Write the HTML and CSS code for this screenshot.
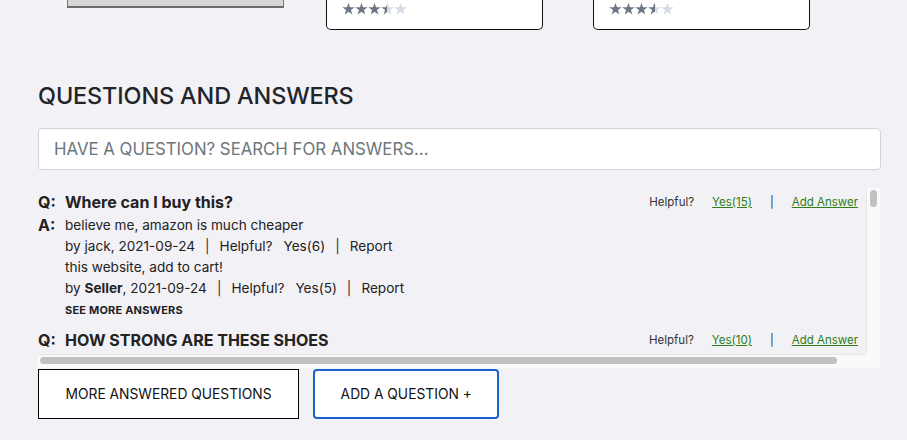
FILE: index.html
```html
<!DOCTYPE html>
<html lang="en">
<head>
<meta charset="utf-8">
<title>Questions and Answers</title>
<link rel="stylesheet" href="styles.css">
</head>
<body>
<svg class="defs" width="0" height="0" aria-hidden="true">
  <defs>
    <symbol id="star" viewBox="0 0 13 12">
      <path d="M6.5 0 L8.03 4.2 L12.68 4.3 L8.97 7 L10.32 11.5 L6.5 8.8 L2.68 11.5 L4.03 7 L0.32 4.3 L4.97 4.2Z"/>
    </symbol>
    <linearGradient id="half" x1="0" x2="1" y1="0" y2="0">
      <stop offset="50%" stop-color="#6d7783"/>
      <stop offset="50%" stop-color="#d5dbe6"/>
    </linearGradient>
  </defs>
</svg>

<div class="related-row">
  <div class="thumb"></div>
  <div class="card">
    <svg class="stars" width="65" height="12" viewBox="0 0 65 12">
      <use href="#star" x="0" width="13" height="12" class="on"/>
      <use href="#star" x="13" width="13" height="12" class="on"/>
      <use href="#star" x="26" width="13" height="12" class="on"/>
      <use href="#star" x="39" width="13" height="12" fill="url(#half)"/>
      <use href="#star" x="52" width="13" height="12" class="off"/>
    </svg>
  </div>
  <div class="card card-last">
    <svg class="stars" width="65" height="12" viewBox="0 0 65 12">
      <use href="#star" x="0" width="13" height="12" class="on"/>
      <use href="#star" x="13" width="13" height="12" class="on"/>
      <use href="#star" x="26" width="13" height="12" class="on"/>
      <use href="#star" x="39" width="13" height="12" fill="url(#half)"/>
      <use href="#star" x="52" width="13" height="12" class="off"/>
    </svg>
  </div>
</div>

<section class="qa">
  <h2 class="qa-title">QUESTIONS AND ANSWERS</h2>
  <input class="search" type="text" placeholder="HAVE A QUESTION? SEARCH FOR ANSWERS...">

  <div class="qa-list">
    <div class="qa-viewport">
      <div class="question">
        <div class="q-row">
          <span class="label">Q:</span>
          <span class="q-text">Where can I buy this?</span>
          <div class="q-actions">
            <span>Helpful?</span>
            <a href="#" class="link">Yes(15)</a>
            <span>|</span>
            <a href="#" class="link">Add Answer</a>
          </div>
        </div>
        <div class="a-row">
          <span class="label a-label">A:</span>
          <div class="answers">
            <div class="answer">
              <p class="a-body">believe me, amazon is much cheaper</p>
              <p class="a-meta">by jack, 2021-09-24<span class="sep">|</span>Helpful?<span class="yes">Yes(6)</span><span class="sep">|</span>Report</p>
            </div>
            <div class="answer">
              <p class="a-body">this website, add to cart!</p>
              <p class="a-meta">by <b>Seller</b>, 2021-09-24<span class="sep">|</span>Helpful?<span class="yes">Yes(5)</span><span class="sep">|</span>Report</p>
            </div>
            <button class="see-more" type="button">SEE MORE ANSWERS</button>
          </div>
        </div>
      </div>

      <div class="question">
        <div class="q-row">
          <span class="label">Q:</span>
          <span class="q-text">HOW STRONG ARE THESE SHOES</span>
          <div class="q-actions">
            <span>Helpful?</span>
            <a href="#" class="link">Yes(10)</a>
            <span>|</span>
            <a href="#" class="link">Add Answer</a>
          </div>
        </div>
      </div>
    </div>
    <div class="vscroll"><div class="vthumb"></div></div>
    <div class="hscroll"><div class="hthumb"></div></div>
    <div class="scroll-corner"></div>
  </div>

  <div class="qa-buttons">
    <button class="btn" type="button">MORE ANSWERED QUESTIONS</button>
    <button class="btn btn-focus" type="button">ADD A QUESTION +</button>
  </div>
</section>
</body>
</html>
```

FILE: styles.css
```css
* { box-sizing: border-box; }

html, body {
  margin: 0;
  padding: 0;
  background: #f2f1f6;
  font-family: "Inter", "Liberation Sans", sans-serif;
  color: #222;
  overflow: hidden;
}

.defs { position: absolute; }

.related-row {
  display: flex;
  align-items: flex-start;
  padding-left: 67px;
}

.thumb {
  width: 217px;
  height: 8px;
  background: #d6d6d6;
  border: 1px solid #777;
  border-top: none;
  border-bottom: 2px solid #6c6c6c;
}

.card {
  width: 217px;
  height: 30px;
  margin-left: 42px;
  background: #fff;
  border: 1px solid #111;
  border-top: none;
  border-radius: 0 0 5px 5px;
  padding: 3px 0 0 15px;
}

.card-last { margin-left: 50px; }

.stars { display: block; }
.stars .on { fill: #6d7783; }
.stars .off { fill: #d5dbe6; }

.qa {
  padding: 0 27px 0 38px;
}

.qa-title {
  margin: 52px 0 0;
  font-size: 23.4px;
  font-weight: 500;
  line-height: 28px;
  color: #212529;
  letter-spacing: -0.1px;
}

.search {
  display: block;
  width: 843px;
  height: 42px;
  margin-top: 18px;
  padding: 0 15px;
  border: 1px solid #ced4da;
  border-radius: 4px;
  background: #fff;
  font-family: inherit;
  font-size: 16.8px;
  color: #495057;
}
.search::placeholder { color: #6c757d; }

.qa-list {
  display: grid;
  grid-template-columns: 828px 14px;
  grid-template-rows: 166px 14px;
  width: 842px;
  margin-top: 18px;
}

.qa-viewport {
  overflow: hidden;
  padding: 2px 8px 0 0;
}

.vscroll {
  background: #fafafa;
  border-left: 1px solid #e6e6e6;
  padding: 2px 3px 0 3px;
}

.vthumb {
  width: 7px;
  height: 17px;
  border-radius: 4px;
  background: #c1c1c1;
}

.hscroll {
  background: #fafafa;
  border-top: 1px solid #e6e6e6;
  padding: 2px 0 0 2px;
}

.hthumb {
  width: 797px;
  height: 7px;
  border-radius: 4px;
  background: #c1c1c1;
}

.scroll-corner { background: #fafafa; }

.question { margin-bottom: 8px; }

.q-row {
  display: flex;
  align-items: center;
  height: 24px;
}

.label {
  width: 27px;
  flex: none;
  font-size: 16px;
  font-weight: 700;
  line-height: 24px;
}

.q-text {
  flex: 1;
  font-size: 16px;
  font-weight: 700;
  line-height: 24px;
}

.q-actions {
  display: flex;
  gap: 18px;
  font-size: 11.5px;
  color: #333;
}

.link {
  color: #2f7d14;
  text-decoration: underline;
}

.a-row {
  display: flex;
  margin-top: 1px;
}

.a-label { line-height: 21px; }

.answers { flex: 1; }

.a-body, .a-meta {
  margin: 0;
  font-size: 13.6px;
  line-height: 21px;
  color: #222;
}

.sep { margin: 0 10px; color: #333; }
.yes { margin-left: 11px; }

.see-more {
  display: block;
  margin: 1px 0 0;
  padding: 0;
  border: none;
  background: none;
  font-family: inherit;
  font-size: 11px;
  font-weight: 700;
  line-height: 20px;
  color: #222;
  letter-spacing: 0.2px;
}

.qa-buttons {
  display: flex;
  gap: 14px;
  margin-top: 1px;
}

.btn {
  height: 50px;
  padding: 0 26.5px;
  background: #fff;
  border: 1px solid #000;
  border-radius: 0;
  font-family: inherit;
  font-size: 13.8px;
  color: #111;
}

.btn-focus {
  padding: 0 25.5px;
  border: 2px solid #1a62cf;
  border-radius: 4px;
}
```
